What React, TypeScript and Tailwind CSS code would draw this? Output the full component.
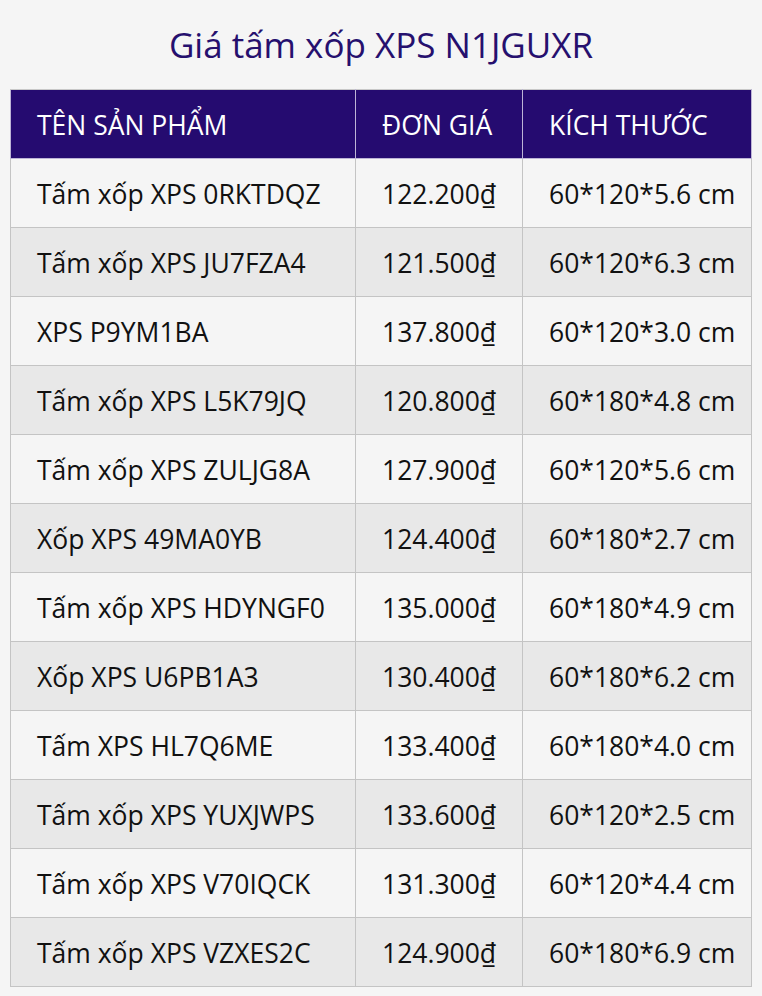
const rows = [
  ['Tấm xốp XPS 0RKTDQZ', '122.200₫', '60*120*5.6 cm'],
  ['Tấm xốp XPS JU7FZA4', '121.500₫', '60*120*6.3 cm'],
  ['XPS P9YM1BA', '137.800₫', '60*120*3.0 cm'],
  ['Tấm xốp XPS L5K79JQ', '120.800₫', '60*180*4.8 cm'],
  ['Tấm xốp XPS ZULJG8A', '127.900₫', '60*120*5.6 cm'],
  ['Xốp XPS 49MA0YB', '124.400₫', '60*180*2.7 cm'],
  ['Tấm xốp XPS HDYNGF0', '135.000₫', '60*180*4.9 cm'],
  ['Xốp XPS U6PB1A3', '130.400₫', '60*180*6.2 cm'],
  ['Tấm XPS HL7Q6ME', '133.400₫', '60*180*4.0 cm'],
  ['Tấm xốp XPS YUXJWPS', '133.600₫', '60*120*2.5 cm'],
  ['Tấm xốp XPS V70IQCK', '131.300₫', '60*120*4.4 cm'],
  ['Tấm xốp XPS VZXES2C', '124.900₫', '60*180*6.9 cm'],
]

export default function App() {
  return (
    <div className="min-h-screen bg-[#f5f5f5] px-[10px] pt-[24px] pb-[10px] font-['Open_Sans',sans-serif]">
      <h1 className="text-center text-[35px] leading-[42px] text-[#26106e] mb-[23px]">
        Giá tấm xốp XPS N1JGUXR
      </h1>
      <table className="w-[742px] border-collapse text-[26.5px]">
        <thead>
          <tr className="bg-[#250b70] text-white">
            <th className="w-[345px] h-[69px] border border-[#bdb5d6] border-t-[#c8c8c8] pl-[26px] pt-[3px] text-left font-normal">TÊN SẢN PHẨM</th>
            <th className="w-[167px] border border-[#bdb5d6] border-t-[#c8c8c8] pl-[26px] pt-[3px] text-left font-normal">ĐƠN GIÁ</th>
            <th className="border border-[#bdb5d6] border-t-[#c8c8c8] pl-[26px] pt-[3px] text-left font-normal">KÍCH THƯỚC</th>
          </tr>
        </thead>
        <tbody>
          {rows.map((r, i) => (
            <tr key={i} className={i % 2 === 0 ? 'bg-[#f5f5f5]' : 'bg-[#e8e8e8]'}>
              <td className="h-[69px] border border-[#c4c4c4] pl-[26px] pt-[3px] text-[#111]">{r[0]}</td>
              <td className="border border-[#c4c4c4] pl-[26px] pt-[3px] text-[#111]">{r[1]}</td>
              <td className="border border-[#c4c4c4] pl-[26px] pt-[3px] text-[#111]">{r[2]}</td>
            </tr>
          ))}
        </tbody>
      </table>
    </div>
  )
}
